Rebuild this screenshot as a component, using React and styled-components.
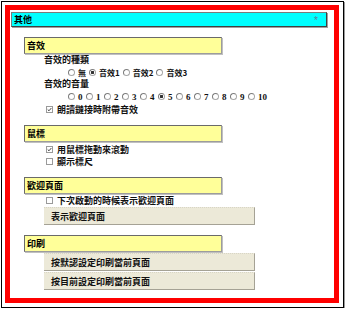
import React from 'react'
import styled, { createGlobalStyle } from 'styled-components'

const GlobalStyle = createGlobalStyle`
  body {
    margin: 0;
    background: #ffffff;
    font-family: "Noto Sans CJK TC", "Liberation Serif", serif;
  }
`

const soundTypes = [
    { label: '無', checked: false },
    { label: '音效1', checked: true },
    { label: '音效2', checked: false },
    { label: '音效3', checked: false },
]

const volumes = [0, 1, 2, 3, 4, 5, 6, 7, 8, 9, 10]

export default function App() {
    return (
        <>
            <GlobalStyle />
            <Frame>
                <RedBox>
                    <TitleBar>
                        <TitleText>其他</TitleText>
                        <Star>*</Star>
                    </TitleBar>

                    <Section>
                        <SectionHead>音效</SectionHead>
                        <Label>音效的種類</Label>
                        <RadioRow>
                            {soundTypes.map((t) => (
                                <RadioItem key={t.label}>
                                    <Radio checked={t.checked} />
                                    <span>{t.label}</span>
                                </RadioItem>
                            ))}
                        </RadioRow>
                        <Label>音效的音量</Label>
                        <RadioRow tall>
                            {volumes.map((v) => (
                                <RadioItem key={v}>
                                    <Radio checked={v === 5} />
                                    <Digit>{v}</Digit>
                                </RadioItem>
                            ))}
                        </RadioRow>
                        <CheckRow>
                            <Check checked />
                            朗讀鏈接時附帶音效
                        </CheckRow>
                    </Section>

                    <Section>
                        <SectionHead>鼠標</SectionHead>
                        <CheckRow first>
                            <Check checked />
                            用鼠標拖動來滾動
                        </CheckRow>
                        <CheckRow>
                            <Check />
                            顯示標尺
                        </CheckRow>
                    </Section>

                    <Section>
                        <SectionHead>歡迎頁面</SectionHead>
                        <CheckRow>
                            <Check />
                            下次啟動的時候表示歡迎頁面
                        </CheckRow>
                        <Button>表示歡迎頁面</Button>
                    </Section>

                    <Section>
                        <SectionHead>印刷</SectionHead>
                        <ButtonGroup>
                            <Button>按默認設定印刷當前頁面</Button>
                            <Button>按目前設定印刷當前頁面</Button>
                        </ButtonGroup>
                    </Section>
                </RedBox>
            </Frame>
        </>
    )
}

function Radio({ checked }) {
    return <RadioDot checked={checked} />
}

function Check({ checked }) {
    return (
        <CheckBox>
            {checked && (
                <svg width="7" height="7" viewBox="0 0 7 7">
                    <path d="M1 3.5 L2.8 5.3 L6 1.5" stroke="#333" strokeWidth="1.3" fill="none" />
                </svg>
            )}
        </CheckBox>
    )
}

const Frame = styled.div`
    box-sizing: border-box;
    margin: 1px 0 0 1px;
    width: 343px;
    height: 307px;
    border: 1px solid #000;
    box-shadow: 1px 1px 0 #9a9a9a;
    padding: 3px 4px 4px 3px;
`

const RedBox = styled.div`
    box-sizing: border-box;
    height: 298px;
    border: 5px solid #ff0000;
    padding: 2px 0 0 1px;
    display: flex;
    flex-direction: column;
`

const TitleBar = styled.div`
    box-sizing: border-box;
    width: 316px;
    height: 18px;
    background: #00ffff;
    border-top: 1px solid #7a7a7a;
    border-left: 1px solid #7a7a7a;
    border-right: 1px solid #404040;
    border-bottom: 1px solid #404040;
    box-shadow: 1px 1px 0 #a0a0a0;
    display: flex;
    align-items: center;
    justify-content: space-between;
    padding: 0 8px 0 2px;
    margin-bottom: 10px;
`

const TitleText = styled.span`
    font-size: 9px;
    font-weight: 700;
    color: #000;
`

const Star = styled.span`
    font-family: "Liberation Sans", sans-serif;
    font-size: 10px;
    color: #5b7d9c;
    line-height: 10px;
    height: 8px;
`

const Section = styled.section`
    display: flex;
    flex-direction: column;
    margin-bottom: 10px;
`

const SectionHead = styled.div`
    box-sizing: border-box;
    margin-left: 13px;
    width: 198px;
    height: 17px;
    background: #ffff99;
    border-top: 1px solid #6a6a6a;
    border-left: 1px solid #6a6a6a;
    border-right: 1px solid #9c9c9c;
    border-bottom: 1px solid #9c9c9c;
    box-shadow: 1px 1px 0 #c0c0c0;
    font-size: 9px;
    font-weight: 700;
    line-height: 15px;
    padding-left: 2px;
    color: #000;
`

const Label = styled.div`
    height: 12px;
    line-height: 12px;
    padding-left: 33px;
    font-size: 9px;
    font-weight: 700;
    color: #111;
`

const RadioRow = styled.div`
    height: ${(p) => (p.tall ? '13px' : '12px')};
    display: flex;
    align-items: center;
    padding-left: 57px;
    gap: 3px;
    font-size: 8px;
    font-weight: 700;
    color: #111;
`

const RadioItem = styled.span`
    display: inline-flex;
    align-items: center;
    gap: 3px;
`

const RadioDot = styled.span`
    box-sizing: border-box;
    width: 7px;
    height: 7px;
    border-radius: 50%;
    border: 1px solid #a8a8a8;
    border-top-color: #7c7c7c;
    border-left-color: #7c7c7c;
    background: ${(p) => (p.checked ? 'radial-gradient(circle, #333 0 1.4px, #fff 1.6px)' : '#fff')};
`

const Digit = styled.span`
    font-family: "Liberation Serif", serif;
    font-size: 9px;
    font-weight: 700;
    min-width: 5px;
`

const CheckRow = styled.div`
    height: 12px;
    display: flex;
    align-items: center;
    gap: 4px;
    padding-left: 35px;
    margin-top: ${(p) => (p.first ? '1px' : '0')};
    font-size: 9px;
    font-weight: 700;
    color: #111;
`

const CheckBox = styled.span`
    box-sizing: border-box;
    width: 7px;
    height: 7px;
    border: 1px solid #9a9a9a;
    background: #fff;
    display: inline-flex;
    align-items: center;
    justify-content: center;
`

const ButtonGroup = styled.div`
    display: flex;
    flex-direction: column;
`

const Button = styled.button`
    box-sizing: border-box;
    margin: 1px 0 0 33px;
    width: 211px;
    height: 18px;
    background: #ece9d8;
    border: none;
    border-top: 1px dotted #d8d5c6;
    border-right: 1px solid #a5a295;
    border-bottom: 1px solid #a5a295;
    padding: 0 0 0 7px;
    text-align: left;
    font-family: "Noto Sans CJK TC", "Liberation Serif", serif;
    font-size: 9px;
    font-weight: 700;
    color: #111;
`
